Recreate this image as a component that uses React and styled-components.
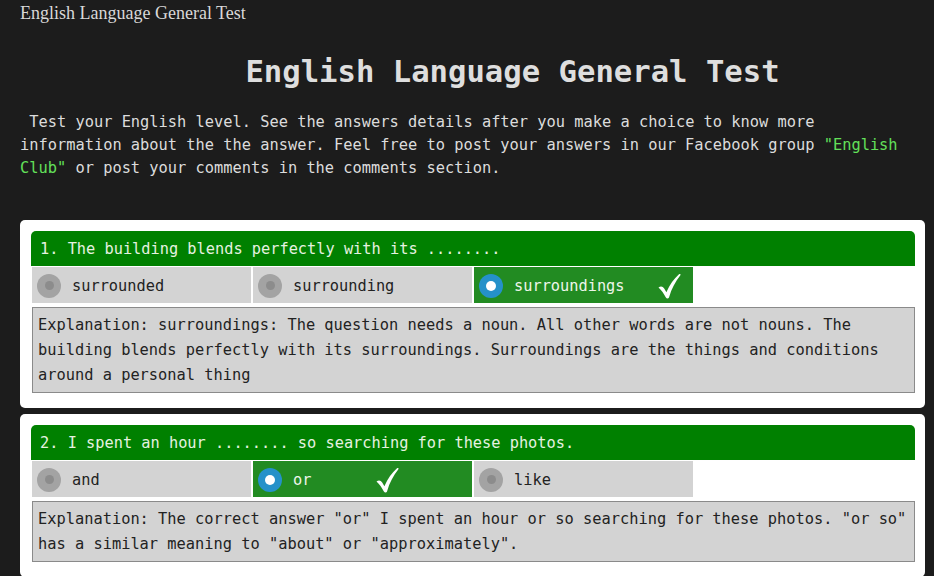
import React from 'react';
import styled, { createGlobalStyle } from 'styled-components';

const GlobalStyle = createGlobalStyle`
  html, body {
    margin: 0;
    padding: 0;
    background: #1c1c1c;
  }
`;

const Page = styled.div`
  width: 905px;
  padding: 0 0 0 20px;
  font-family: 'DejaVu Sans Mono', 'Liberation Mono', monospace;
  color: #dcdcdc;
`;

const SiteName = styled.div`
  font-family: 'Liberation Serif', serif;
  font-size: 18px;
  line-height: 26px;
  color: #d8d8d8;
`;

const Title = styled.h1`
  margin: 26px 0 0;
  padding-left: 80px;
  text-align: center;
  font-size: 30.6px;
  line-height: 40px;
  font-weight: bold;
  color: #dedede;
`;

const Intro = styled.p`
  margin: 19px 0 0;
  width: 885px;
  font-size: 15.35px;
  line-height: 23px;
  color: #dcdcdc;
  white-space: pre-wrap;
`;

const Link = styled.span`
  color: #63e05a;
`;

const Questions = styled.div`
  margin-top: 40px;
  display: flex;
  flex-direction: column;
  gap: 6px;
`;

const Card = styled.section`
  background: #fff;
  border-radius: 5px;
  padding: 11px 10px 15px 11px;
`;

const Question = styled.div`
  background: #008000;
  color: #e6f2e0;
  border-radius: 5px 5px 0 0;
  height: 35px;
  padding: 0 9px;
  display: flex;
  align-items: center;
  font-size: 15.3px;
`;

const Options = styled.div`
  display: flex;
  gap: 2px;
  margin: 1px 0 4px 1px;
`;

const Option = styled.div`
  width: 219px;
  height: 36px;
  display: flex;
  align-items: center;
  padding: 1px 0 0 5px;
  box-sizing: border-box;
  background: ${p => (p.$correct ? '#228b22' : '#d3d3d3')};
  color: ${p => (p.$correct ? '#eef6ea' : '#222')};
  font-size: 15.3px;
`;

const Radio = styled.span`
  width: 24px;
  height: 24px;
  border-radius: 50%;
  background: ${p => (p.$on ? '#2591c9' : '#a3a3a3')};
  display: flex;
  align-items: center;
  justify-content: center;
  margin-right: 11px;
  flex-shrink: 0;

  &::after {
    content: '';
    width: ${p => (p.$on ? '10px' : '9px')};
    height: ${p => (p.$on ? '10px' : '9px')};
    border-radius: 50%;
    background: ${p => (p.$on ? '#fff' : '#8c8c8c')};
  }
`;

const Check = styled.svg`
  width: 24px;
  height: 26px;
  margin-left: ${p => p.$gap}px;
  flex-shrink: 0;
`;

const Explanation = styled.div`
  background: #d3d3d3;
  border: 1px solid #8a8a8a;
  margin-left: 1px;
  padding: 5px 5px 4px;
  font-size: 15.35px;
  line-height: 25px;
  color: #222;
`;

const questions = [
  {
    text: '1. The building blends perfectly with its ........',
    options: ['surrounded', 'surrounding', 'surroundings'],
    correct: 2,
    gap: 32,
    explanation:
      'Explanation: surroundings: The question needs a noun. All other words are not nouns. The building blends perfectly with its surroundings. Surroundings are the things and conditions around a personal thing',
  },
  {
    text: '2. I spent an hour ........ so searching for these photos.',
    options: ['and', 'or', 'like'],
    correct: 1,
    gap: 64,
    explanation:
      'Explanation: The correct answer "or" I spent an hour or so searching for these photos. "or so" has a similar meaning to "about" or "approximately".',
  },
];

const CheckMark = ({ gap }) => (
  <Check $gap={gap} viewBox="0 0 24 26">
    <path
      d="M1.5 14.5 C3.8 12.6 5.8 13.2 7.2 15.6 L9.4 19.2 C12.8 11.5 16.8 5.8 22 1.2 C23.2 0.4 24 1.3 23.2 2.4 C18.4 8.4 14.6 15.4 12 24.4 C11.5 25.8 9.6 25.9 8.9 24.6 C6.8 20.4 4.6 17.2 1.5 14.5 Z"
      fill="#fff"
    />
  </Check>
);

const App = () => {
  return (
    <>
      <GlobalStyle />
      <Page>
        <SiteName>English Language General Test</SiteName>
        <Title>English Language General Test</Title>
        <Intro>
          {' Test your English level. See the answers details after you make a choice to know more information about the the answer. Feel free to post your answers in our Facebook group '}
          <Link>"English Club"</Link>
          {' or post your comments in the comments section.'}
        </Intro>
        <Questions>
          {questions.map(q => (
            <Card key={q.text}>
              <Question>{q.text}</Question>
              <Options>
                {q.options.map((o, i) => (
                  <Option key={o} $correct={i === q.correct}>
                    <Radio $on={i === q.correct} />
                    <span>{o}</span>
                    {i === q.correct && <CheckMark gap={q.gap} />}
                  </Option>
                ))}
              </Options>
              <Explanation>{q.explanation}</Explanation>
            </Card>
          ))}
        </Questions>
      </Page>
    </>
  );
};

export default App;
